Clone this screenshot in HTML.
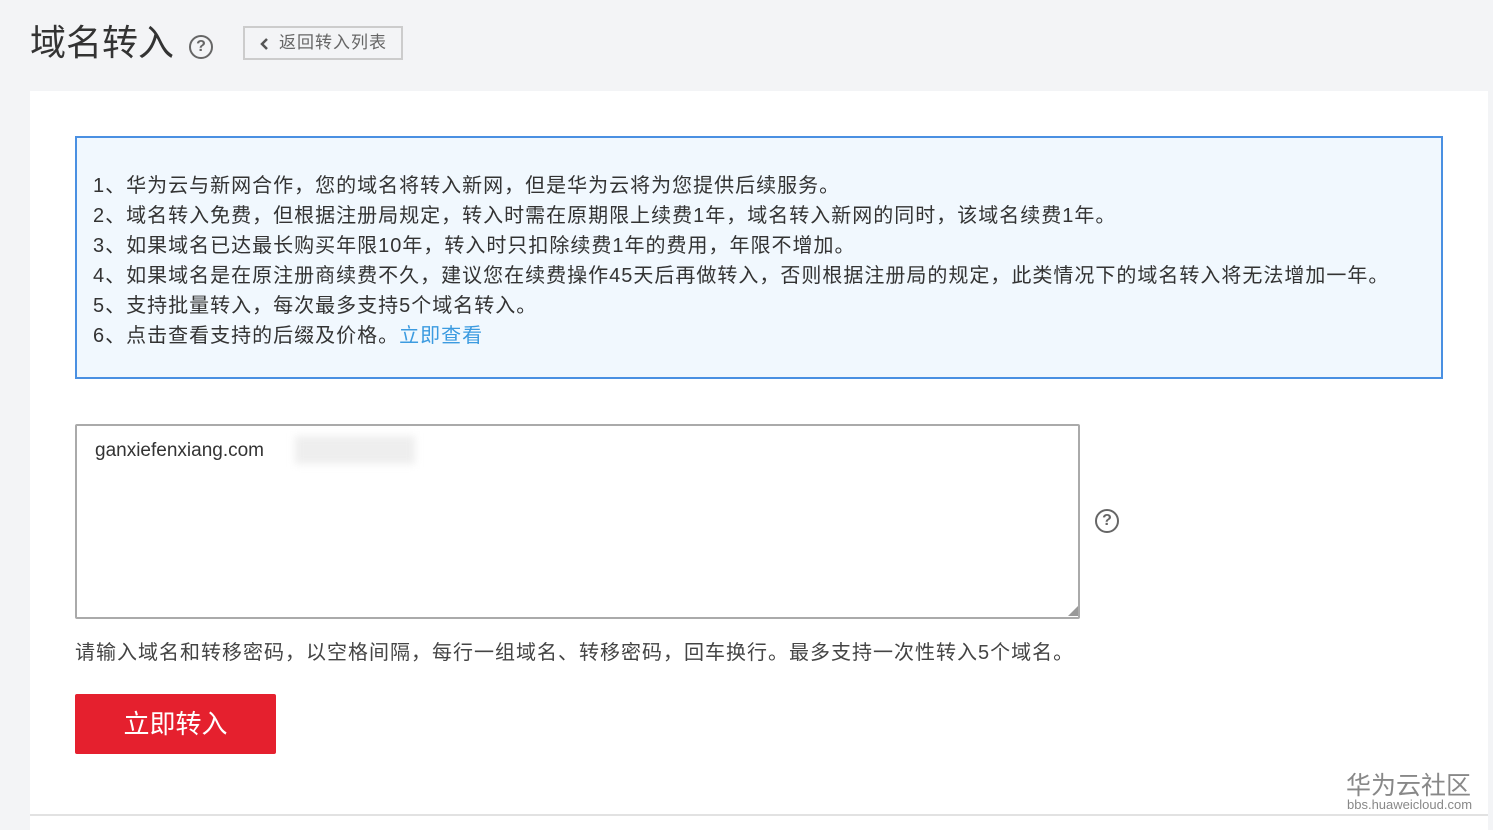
<!DOCTYPE html>
<html><head><meta charset="utf-8"><style>
body{margin:0;width:1493px;height:830px;background:#f3f4f6;font-family:"Liberation Sans","Noto Sans CJK SC",sans-serif;position:relative;overflow:hidden;color:#333}
.abs{position:absolute}
.title{left:30px;top:20px;font-size:36px;color:#333;line-height:46px}
.q{border:2.5px solid #666;border-radius:50%;color:#666;font-weight:bold;text-align:center;box-sizing:border-box}
.back{left:243px;top:26px;width:160px;height:34px;border:2px solid #ccc;box-sizing:border-box;font-size:17px;color:#666;line-height:30px;padding-left:34px;letter-spacing:1px}
.panel{left:30px;top:91px;width:1458px;height:723px;background:#fff}
.info{left:75px;top:136px;width:1368px;height:243px;box-sizing:border-box;border:2px solid #4a90e2;background:#f1f8fe;padding:33px 0 0 16px;font-size:20px;letter-spacing:1px;line-height:30px;color:#333}
.info a{color:#3c9be0}
.ta{left:75px;top:424px;width:1005px;height:195px;box-sizing:border-box;border:2px solid #aaa;border-radius:2px;padding:14px 18px;font-size:19px;color:#333}
.hint{left:75px;top:636px;font-size:20px;letter-spacing:1px;color:#444}
.btn{left:75px;top:694px;width:201px;height:60px;background:#e5202e;color:#fff;font-size:26px;text-align:center;line-height:60px;border-radius:2px}
</style></head><body>
<div class="abs title">域名转入</div>
<div class="abs q" style="left:189px;top:35px;width:24px;height:24px;font-size:16px;line-height:19px">?</div>
<div class="abs back"><svg style="position:absolute;left:15px;top:9px" width="10" height="14"><path d="M7 2 L2 7 L7 12" stroke="#555" stroke-width="2.5" fill="none"/></svg>返回转入列表</div>
<div class="abs panel"></div>
<div class="abs" style="left:30px;top:814px;width:1458px;height:2px;background:#e2e2e2"></div>
<div class="abs" style="left:30px;top:816px;width:1458px;height:14px;background:#fff"></div>
<div class="abs info">1、华为云与新网合作，您的域名将转入新网，但是华为云将为您提供后续服务。<br>2、域名转入免费，但根据注册局规定，转入时需在原期限上续费1年，域名转入新网的同时，该域名续费1年。<br>3、如果域名已达最长购买年限10年，转入时只扣除续费1年的费用，年限不增加。<br>4、如果域名是在原注册商续费不久，建议您在续费操作45天后再做转入，否则根据注册局的规定，此类情况下的域名转入将无法增加一年。<br>5、支持批量转入，每次最多支持5个域名转入。<br>6、点击查看支持的后缀及价格。<a>立即查看</a></div>
<div class="abs ta">ganxiefenxiang.com</div>
<div class="abs" style="left:295px;top:436px;width:120px;height:28px;background:#eee;filter:blur(4px)"></div>
<div class="abs" style="left:1068px;top:606px;width:0;height:0;border-left:10px solid transparent;border-bottom:10px solid #999"></div>
<div class="abs q" style="left:1095px;top:509px;width:24px;height:24px;font-size:16px;line-height:19px">?</div>
<div class="abs hint">请输入域名和转移密码，以空格间隔，每行一组域名、转移密码，回车换行。最多支持一次性转入5个域名。</div>
<div class="abs btn">立即转入</div>
<div class="abs" style="left:1346px;top:766px;font-size:25px;color:#888">华为云社区</div>
<div class="abs" style="left:1347px;top:797px;font-size:13px;color:#888">bbs.huaweicloud.com</div>
</body></html>
